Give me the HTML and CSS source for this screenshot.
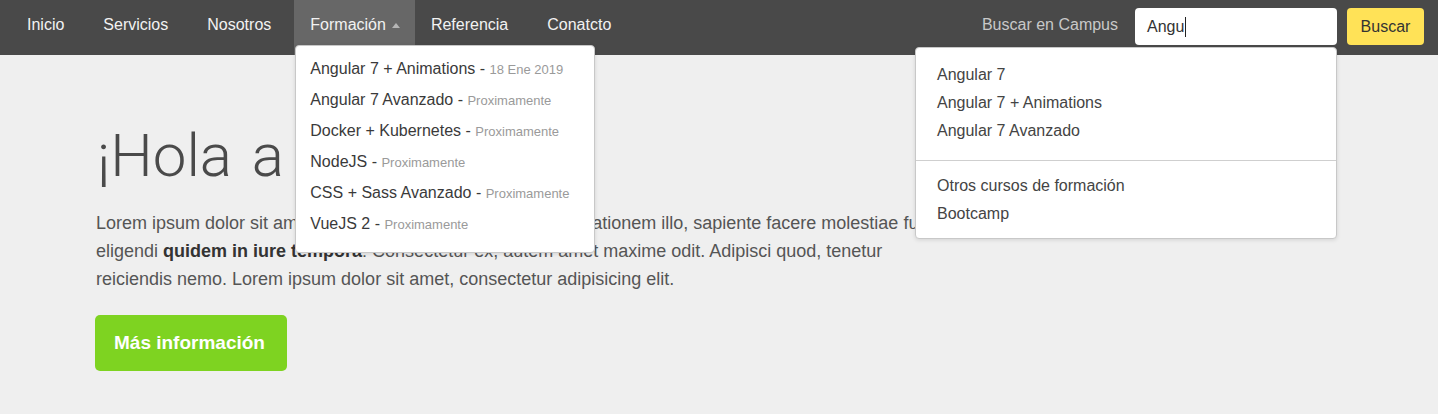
FILE: index.html
```html
<!DOCTYPE html>
<html lang="es">
<head>
<meta charset="utf-8">
<title>Campus</title>
<link rel="stylesheet" href="styles.css">
</head>
<body>
<header class="navbar">
  <ul class="nav">
    <li class="nav-item"><a href="#">Inicio</a></li>
    <li class="nav-item"><a href="#">Servicios</a></li>
    <li class="nav-item"><a href="#">Nosotros</a></li>
    <li class="nav-item nav-item--active">
      <a href="#">Formación<span class="caret"></span></a>
      <ul class="dropdown">
        <li>Angular 7 + Animations - <small>18 Ene 2019</small></li>
        <li>Angular 7 Avanzado - <small>Proximamente</small></li>
        <li>Docker + Kubernetes - <small>Proximamente</small></li>
        <li>NodeJS - <small>Proximamente</small></li>
        <li>CSS + Sass Avanzado - <small>Proximamente</small></li>
        <li>VueJS 2 - <small>Proximamente</small></li>
      </ul>
    </li>
    <li class="nav-item"><a href="#">Referencia</a></li>
    <li class="nav-item"><a href="#">Conatcto</a></li>
  </ul>
  <form class="search">
    <label class="search-label">Buscar en Campus</label>
    <div class="search-field">
      <div class="search-input">Angu<span class="cursor"></span></div>
      <div class="search-menu">
        <ul class="search-group">
          <li>Angular 7</li>
          <li>Angular 7 + Animations</li>
          <li>Angular 7 Avanzado</li>
        </ul>
        <hr class="search-divider">
        <ul class="search-group search-group--last">
          <li>Otros cursos de formación</li>
          <li>Bootcamp</li>
        </ul>
      </div>
    </div>
    <button type="button" class="search-btn">Buscar</button>
  </form>
</header>
<main class="hero">
  <h1 class="hero-title">¡Hola a todos!</h1>
  <p class="hero-text">Lorem ipsum dolor sit amet consectetur adipisicing elit. Quas rationem illo, sapiente facere molestiae fugiat eligendi <strong>quidem in iure tempora</strong>: Consectetur ex, autem amet maxime odit. Adipisci quod, tenetur reiciendis nemo. Lorem ipsum dolor sit amet, consectetur adipisicing elit.</p>
  <a href="#" class="hero-btn">Más información</a>
</main>
</body>
</html>
```

FILE: styles.css
```css
* { box-sizing: border-box; }
html, body { margin: 0; padding: 0; }
body {
  font-family: "Liberation Sans", Arial, sans-serif;
  background: #efefef;
  color: #333;
  height: 414px;
  overflow: hidden;
}
ul { list-style: none; margin: 0; padding: 0; }
a { text-decoration: none; color: inherit; }

.navbar {
  position: relative;
  z-index: 10;
  display: flex;
  justify-content: space-between;
  align-items: flex-start;
  height: 55px;
  background: #494949;
  padding: 0 14px 0 11px;
}
.nav { display: flex; gap: 7px; }
.nav-item { position: relative; }
.nav-item > a {
  display: flex;
  align-items: center;
  height: 55px;
  padding: 0 16px 5px;
  font-size: 16px;
  color: #f2f2f2;
}
.nav-item--active { margin-right: -7px; }
.nav-item--active > a { background: #676767; padding-right: 15px; }
.caret {
  display: inline-block;
  width: 0; height: 0;
  margin-left: 6px;
  border-left: 4.5px solid transparent;
  border-right: 4.5px solid transparent;
  border-bottom: 5px solid #b5b5b5;
}

.dropdown {
  position: absolute;
  top: 45px;
  left: 1px;
  width: 300px;
  background: #fff;
  border: 1px solid #c8c8c8;
  border-radius: 4px;
  box-shadow: 0 1px 4px rgba(0,0,0,0.12);
  padding: 7px 14px 13px;
}
.dropdown li {
  line-height: 31px;
  height: 31px;
  font-size: 16px;
  color: #3a3a3a;
  white-space: nowrap;
}
.dropdown small { font-size: 13px; line-height: 1; color: #9a9a9a; }

.search { display: flex; align-items: center; height: 55px; padding-bottom: 2px; }
.search-label { font-size: 16px; color: #c8c8c8; margin-right: 17px; padding-bottom: 3px; }
.search-field { position: relative; }
.search-input {
  width: 202px;
  height: 37px;
  background: #fff;
  border-radius: 4px;
  padding: 0 12px;
  display: flex;
  align-items: center;
  font-size: 16px;
  color: #333;
}
.cursor { display: inline-block; width: 1px; height: 20px; background: #222; margin-left: 1px; }
.search-btn {
  margin-left: 10px;
  width: 77px;
  height: 37px;
  border: 0;
  border-radius: 4px;
  background: #ffe257;
  font-family: "Liberation Sans", Arial, sans-serif;
  font-size: 16px;
  color: #333;
  padding: 0;
}
.search-menu {
  position: absolute;
  top: 39px;
  right: 0;
  width: 422px;
  background: #fff;
  border: 1px solid #c8c8c8;
  border-radius: 4px;
  box-shadow: 0 1px 4px rgba(0,0,0,0.12);
  padding: 13px 21px 10px;
}
.search-group li { line-height: 28px; font-size: 16px; color: #444; }
.search-divider {
  border: 0;
  border-top: 1px solid #cfcfcf;
  margin: 15px -21px 11px;
}

.hero { padding: 65px 0 0 96px; }
.hero-title {
  margin: 0;
  font-family: Roboto, "Liberation Sans", sans-serif;
  font-weight: 300;
  font-size: 60px;
  line-height: 72px;
  word-spacing: 5px;
  color: #4a4a4a;
  margin-left: 1px;
}
.hero-text {
  margin: 17px 0 0;
  width: 860px;
  font-size: 18px;
  line-height: 28px;
  color: #555;
}
.hero-text strong { color: #333; }
.hero-btn {
  display: inline-flex;
  align-items: center;
  height: 56px;
  margin: 22px 0 0 -1px;
  padding: 0 22px 0 19px;
  background: #7ed321;
  border-radius: 5px;
  color: #fff;
  font-size: 19px;
  font-weight: bold;
}
```
